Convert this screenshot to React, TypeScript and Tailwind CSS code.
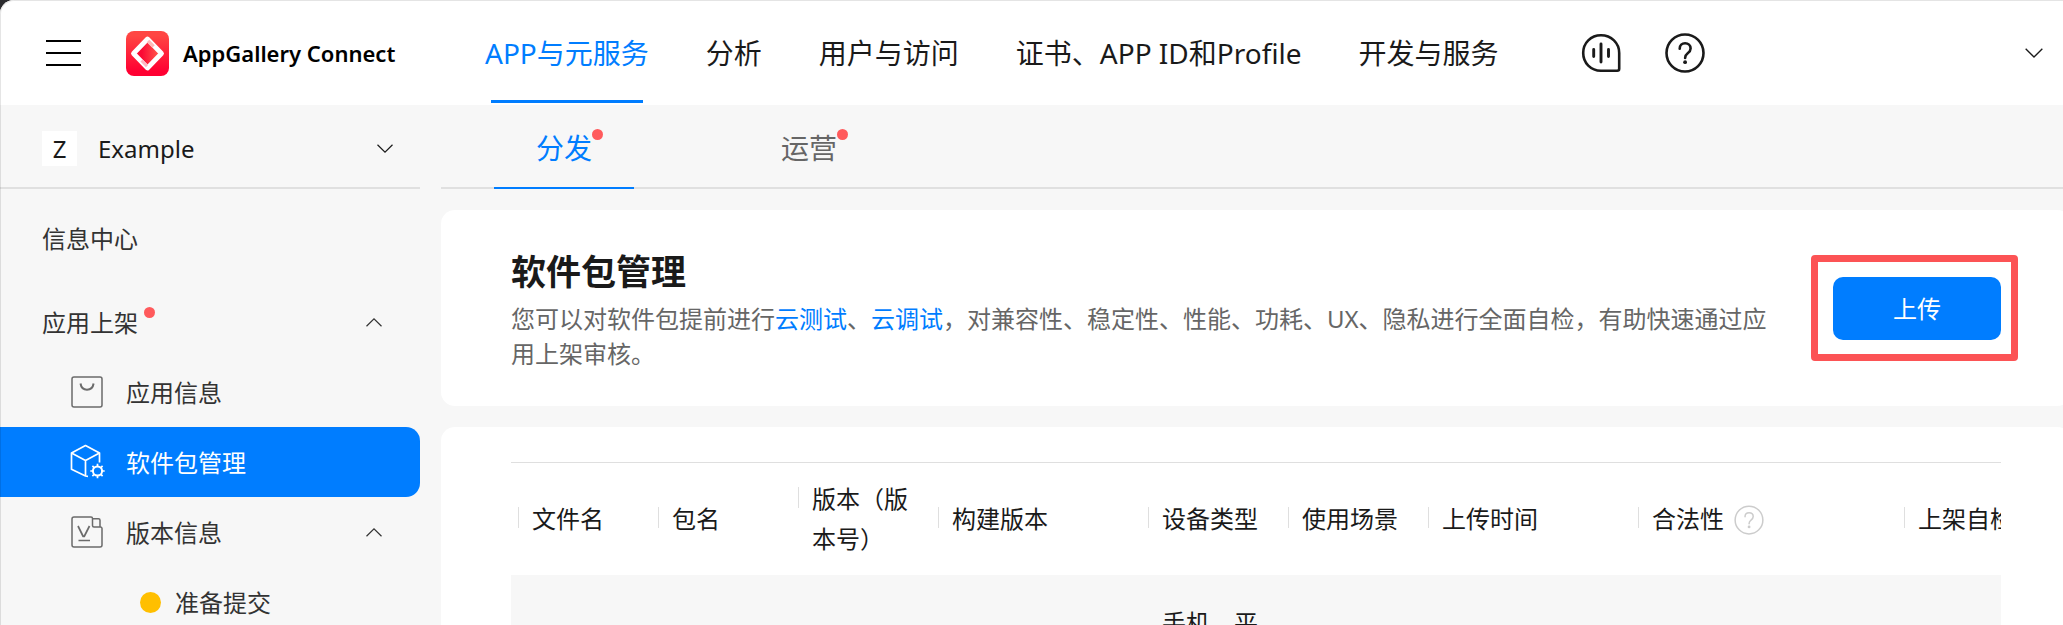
import React from "react";

const NAV = ["APP与元服务", "分析", "用户与访问", "证书、APP ID和Profile", "开发与服务"];

const COLUMNS = [
  { title: "文件名", width: "w-[140px]" },
  { title: "包名", width: "w-[140px]" },
  { title: "版本（版本号）", width: "w-[140px]" },
  { title: "构建版本", width: "w-[210px]" },
  { title: "设备类型", width: "w-[140px]", value: "手机、平板" },
  { title: "使用场景", width: "w-[140px]" },
  { title: "上传时间", width: "w-[210px]" },
  { title: "合法性", width: "w-[266px]", help: true },
  { title: "上架自检", width: "w-[210px]" },
];

function Chevron({ up = false, className = "" }: { up?: boolean; className?: string }) {
  return (
    <svg viewBox="0 0 16 9" fill="none" stroke="currentColor" strokeWidth="1.2" className={className} aria-hidden="true">
      <path d={up ? "M.5 8.3 8 .9l7.500 7.400" : "M.5.7 8 8.100 15.500.7"} />
    </svg>
  );
}

function HelpIcon({ className = "", stroke = 2 }: { className?: string; stroke?: number }) {
  return (
    <svg viewBox="0 0 40 40" fill="none" stroke="currentColor" strokeWidth={stroke} strokeLinecap="round" className={className} aria-hidden="true">
      <circle cx="20" cy="20" r="18.500" />
      <path d="M14.700 15.700c0-3.200 2.300-5.400 5.400-5.400s5.500 2.100 5.500 5.100c0 2.300-1.200 3.500-2.900 4.800-1.700 1.300-2.600 2.300-2.600 4.700" />
      <circle cx="20.100" cy="29.200" r="1.900" fill="currentColor" stroke="none" />
    </svg>
  );
}

function VoiceIcon() {
  return (
    <svg viewBox="0 0 40 40" fill="none" stroke="currentColor" strokeWidth="2.600" strokeLinecap="round" strokeLinejoin="round" className="size-10" aria-hidden="true">
      <path d="M20 2.300C9.800 2.300 2.200 10 2.200 20S9.800 37.700 20 37.700h16.200a2 2 0 0 0 2-2V20C38.200 10 30.200 2.300 20 2.300Z" />
      <path d="M20 11v18" strokeWidth="2.900" />
      <path d="M12.700 16.500v7M27.500 16.500v7" strokeWidth="2.900" />
    </svg>
  );
}

function Logo() {
  return (
    <svg viewBox="0 0 43 45" className="h-[45px] w-[43px]" aria-hidden="true">
      <defs>
        <linearGradient id="logoBg" x1="0" y1="0" x2="0" y2="1">
          <stop offset="0.100" stopColor="#ff4643" />
          <stop offset="0.900" stopColor="#ff0032" />
        </linearGradient>
        <linearGradient id="logoCore" x1="0" y1="0" x2="1" y2="0">
          <stop offset="0.300" stopColor="#fb0a34" />
          <stop offset="0.800" stopColor="#ff4a48" />
        </linearGradient>
      </defs>
      <rect width="43" height="45" rx="8" fill="url(#logoBg)" />
      <path d="M21.500 8 35.500 22.500 21.500 37 7.500 22.500Z" fill="url(#logoCore)" stroke="#fff" strokeWidth="4.800" strokeLinejoin="round" />
      <path d="m22 10 5.500 5.600" stroke="#ffb9b9" strokeWidth="3.500" />
      <path d="m15.500 29.500 5.500 5.600" stroke="#ffb9c4" strokeWidth="3" />
    </svg>
  );
}

function BagIcon() {
  return (
    <svg viewBox="0 0 32 32" fill="none" stroke="#6b6b6b" strokeWidth="1.500" className="size-8" aria-hidden="true">
      <rect x="1" y="1" width="30" height="30" rx="2" />
      <path d="M9.500 7.500c.6 3.800 3.200 6.200 6.500 6.200s6-2.400 6.600-6.200" strokeWidth="2" />
    </svg>
  );
}

function PackageIcon() {
  return (
    <svg viewBox="0 0 36 36" fill="none" stroke="currentColor" strokeWidth="1.700" strokeLinejoin="round" className="size-9" aria-hidden="true">
      <path d="M18 32.300 15.500 32 1.500 25.300V9L15.500 1.600 29.500 9v9.500" />
      <path d="m1.500 9 14 7.500 14-7.500M15.500 16.500V32" />
      <circle cx="27.500" cy="27" r="4.600" strokeWidth="2" />
      <path d="M27.500 19.800v2.600M27.500 31.600v2.600M20.300 27h2.600M32.100 27h2.600M22.400 21.900l1.900 1.900M30.700 30.200l1.900 1.900M22.400 32.100l1.900-1.900M30.700 23.800l1.900-1.900" strokeWidth="1.700" />
    </svg>
  );
}

function VersionIcon() {
  return (
    <svg viewBox="0 0 32 32" fill="none" stroke="#6b6b6b" strokeWidth="1.500" strokeLinejoin="round" className="size-8" aria-hidden="true">
      <path d="M21.500 2.500A1.500 1.500 0 0 0 20 1H3a2 2 0 0 0-2 2v26a2 2 0 0 0 2 2h26a2 2 0 0 0 2-2V12.500a1.500 1.500 0 0 0-1.500-1.500H23a1.500 1.500 0 0 1-1.500-1.500Z" />
      <path d="M21.500 2.800h6a1.500 1.500 0 0 1 1.500 1.500V11" />
      <path d="m7 10 5.200 10.500h1L18.500 10M7.500 24.500h11.500" strokeWidth="1.700" />
    </svg>
  );
}

function Dot({ className = "-top-0.5" }: { className?: string }) {
  return <span className={`absolute left-full size-[11px] rounded-full bg-[#ff5a5c] ${className}`} />;
}

export default function App() {
  return (
    <div className="h-screen bg-[#2b2b2e] font-['Noto_Sans','Noto_Sans_CJK_SC',sans-serif] text-2xl leading-[35px] text-[#1a1a1a]">
      <div className="relative flex h-full flex-col overflow-hidden rounded-tl-[14px] bg-[#f7f7f7]">
        <header className="flex h-[105px] shrink-0 items-center bg-white pr-5 pl-[46px]">
          <button type="button" aria-label="菜单" className="flex shrink-0 flex-col gap-2.5">
            <span className="h-0.5 w-[35px] bg-black" />
            <span className="h-0.5 w-[35px] bg-black" />
            <span className="h-0.5 w-[35px] bg-black" />
          </button>
          <a href="#home" className="ml-[45px] flex w-[359px] shrink-0 items-center gap-3.5 pt-0.5">
            <Logo />
            <span className="text-[22px] font-semibold whitespace-nowrap text-black">AppGallery Connect</span>
          </a>
          <nav className="flex h-full gap-[57px] text-[28px] whitespace-nowrap">
            {NAV.map((item, i) => (
              <a key={item} href="#nav" className={i === 0 ? "relative flex items-center pt-0.5 text-[#007dff]" : "flex items-center pt-0.5"}>
                {item}
                {i === 0 && <span className="absolute inset-x-[6px] bottom-0.5 h-[3px] bg-[#007dff]" />}
              </a>
            ))}
          </nav>
          <div className="ml-[82px] flex items-center gap-11">
            <button type="button" aria-label="语音助手">
              <VoiceIcon />
            </button>
            <button type="button" aria-label="帮助">
              <HelpIcon className="size-10" stroke={2.6} />
            </button>
          </div>
          <button type="button" aria-label="展开" className="ml-auto">
            <Chevron className="h-2.5 w-[18px]" />
          </button>
        </header>

        <div className="flex min-h-0 flex-1">
          <aside className="w-[420px] shrink-0 text-[#333]">
            <button type="button" className="flex h-[84px] w-full items-center border-b-2 border-[#e0e0e0] pt-1 pr-[27px] pl-[42px] text-[#1a1a1a]">
              <span className="flex size-[35px] items-center justify-center bg-white">Z</span>
              <span className="ml-[21px]">Example</span>
              <Chevron className="ml-auto h-[9px] w-4" />
            </button>
            <nav className="pt-3.5">
              <a href="#info" className="flex h-[70px] items-center pl-[42px]">信息中心</a>
              <button type="button" className="mt-3.5 flex h-[70px] w-full items-center justify-between pr-[38px] pl-[42px]">
                <span className="relative">
                  应用上架
                  <Dot className="top-0.5 ml-1.5" />
                </span>
                <Chevron up className="h-[9px] w-4" />
              </button>
              <a href="#app-info" className="flex h-[70px] items-center pl-[70px]">
                <span className="flex w-14 pl-px">
                  <BagIcon />
                </span>
                应用信息
              </a>
              <a href="#packages" className="flex h-[70px] items-center rounded-r-[14px] bg-[#007dff] pl-[70px] text-white">
                <span className="flex w-14">
                  <PackageIcon />
                </span>
                软件包管理
              </a>
              <button type="button" className="flex h-[70px] w-full items-center pr-[38px] pl-[70px]">
                <span className="flex w-14 pl-px">
                  <VersionIcon />
                </span>
                版本信息
                <Chevron up className="ml-auto h-[9px] w-4" />
              </button>
              <a href="#submit" className="flex h-[70px] items-center gap-3.5 pl-[140px]">
                <span className="size-[21px] rounded-full bg-[#ffbf00]" />
                准备提交
              </a>
            </nav>
          </aside>

          <main className="-mr-2 ml-[21px] flex min-w-0 flex-1 flex-col">
            <div className="flex h-[84px] shrink-0 gap-[105px] border-b-2 border-[#e0e0e0] pl-[53px] text-[28px]">
              <a href="#distribute" className="-mb-0.5 flex w-[140px] items-center justify-center border-b-2 border-[#007dff] pt-1 text-[#007dff]">
                <span className="relative">
                  分发
                  <Dot />
                </span>
              </a>
              <a href="#operate" className="flex w-[140px] items-center justify-center pt-1 text-[#666]">
                <span className="relative">
                  运营
                  <Dot />
                </span>
              </a>
            </div>

            <section className="mt-[21px] flex h-[196px] shrink-0 items-center justify-between rounded-[14px] bg-white px-[70px]">
              <div className="w-[1270px]">
                <h1 className="text-[35px] leading-[54px] font-bold">软件包管理</h1>
                <p className="mt-0.5 text-[#666]">
                  您可以对软件包提前进行
                  <a href="#cloud-test" className="text-[#007dff]">云测试</a>、
                  <a href="#cloud-debug" className="text-[#007dff]">云调试</a>
                  ，对兼容性、稳定性、性能、功耗、UX、隐私进行全面自检，有助快速通过应用上架审核。
                </p>
              </div>
              <div className="relative shrink-0">
                <button type="button" className="h-[63px] w-[168px] rounded-[10px] bg-[#007dff] text-white">上传</button>
                <span className="pointer-events-none absolute -top-[22px] -right-[17px] -bottom-[21px] -left-[22px] rounded-[4px] border-[7px] border-[#fc5355]" />
              </div>
            </section>

            <section className="mt-[21px] min-h-0 flex-1 rounded-t-[14px] bg-white px-[70px] pt-[35px]">
              <div className="h-full overflow-hidden border-t border-[#dfdfdf]">
                <table className="w-[1596px] table-fixed border-collapse text-left leading-10">
                  <thead>
                    <tr>
                      {COLUMNS.map((c) => (
                        <th key={c.title} scope="col" className={`${c.width} py-4 pr-3.5 pl-[7px] font-normal`}>
                          <span className="flex items-start">
                            <span className="mt-2 mr-[13px] h-[21px] w-px shrink-0 bg-[#dfdfdf]" />
                            <span>{c.title}</span>
                            {c.help && <HelpIcon className="mt-1.5 ml-2.5 size-[30px] shrink-0 text-[#ccc]" />}
                          </span>
                        </th>
                      ))}
                    </tr>
                  </thead>
                  <tbody>
                    <tr className="bg-[#f7f7f7]">
                      {COLUMNS.map((c) => (
                        <td key={c.title} className="py-7 pr-3.5 pl-[21px] align-top">{c.value}</td>
                      ))}
                    </tr>
                  </tbody>
                </table>
              </div>
            </section>
          </main>
        </div>
        <div className="pointer-events-none absolute inset-0 rounded-tl-[14px] border-t border-l border-black/10" />
      </div>
    </div>
  );
}
